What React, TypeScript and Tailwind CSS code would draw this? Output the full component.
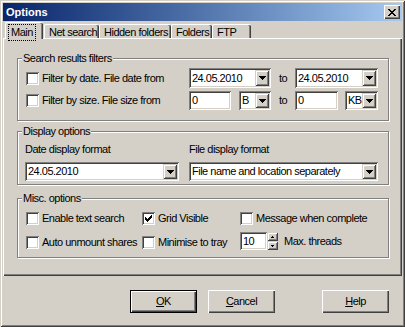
import React from "react";

const sunken =
  "bg-white shadow-[inset_1px_1px_0_#808080,inset_-1px_-1px_0_#ffffff,inset_2px_2px_0_#404040,inset_-2px_-2px_0_#d4d0c8]";
const raised =
  "bg-[#d4d0c8] shadow-[inset_1px_1px_0_#d4d0c8,inset_-1px_-1px_0_#404040,inset_2px_2px_0_#ffffff,inset_-2px_-2px_0_#808080]";
const pushButton =
  "bg-[#d4d0c8] shadow-[inset_1px_1px_0_#ffffff,inset_-1px_-1px_0_#404040,inset_-2px_-2px_0_#808080]";

function DownArrow() {
  return (
    <svg width="7" height="4" viewBox="0 0 7 4" shapeRendering="crispEdges">
      <path d="M0 0h7v1H0zM1 1h5v1H1zM2 2h3v1H2zM3 3h1v1H3z" fill="#000" />
    </svg>
  );
}

function Combo({ value, className }: { value: string; className: string }) {
  return (
    <div className={`${sunken} flex p-[2px] ${className}`}>
      <span className="flex flex-1 items-center overflow-hidden whitespace-nowrap pl-[1px]">{value}</span>
      <span className={`${raised} flex w-[14px] shrink-0 items-center justify-center`}>
        <DownArrow />
      </span>
    </div>
  );
}

function Edit({ value, className }: { value: string; className: string }) {
  return <div className={`${sunken} flex items-center pl-[3px] ${className}`}>{value}</div>;
}

function Check({ checked }: { checked?: boolean }) {
  return (
    <span className={`${sunken} flex h-[13px] w-[13px] shrink-0 items-center justify-center`}>
      {checked && (
        <svg width="7" height="7" viewBox="0 0 7 7" shapeRendering="crispEdges">
          <path
            d="M0 2h1v3H0zM1 3h1v3H1zM2 4h1v3H2zM3 3h1v3H3zM4 2h1v3H4zM5 1h1v3H5zM6 0h1v3H6z"
            fill="#000"
          />
        </svg>
      )}
    </span>
  );
}

function CheckItem({ label, checked, className = "" }: { label: string; checked?: boolean; className?: string }) {
  return (
    <div className={`flex items-center gap-[3px] whitespace-nowrap ${className}`}>
      <Check checked={checked} />
      <span>{label}</span>
    </div>
  );
}

function Group({ title, className, children }: { title: string; className: string; children: React.ReactNode }) {
  return (
    <div className={`mx-[13px] border border-[#808080] shadow-[1px_1px_0_#ffffff,inset_1px_1px_0_#ffffff] ${className}`}>
      <div className="-mt-[7px] ml-[4px] w-fit bg-[#d4d0c8] px-[1px]">{title}</div>
      {children}
    </div>
  );
}

const TABS = [
  { label: "Net search", w: "w-[55px]" },
  { label: "Hidden folders", w: "w-[72px]" },
  { label: "Folders", w: "w-[41px]" },
  { label: "FTP", w: "w-[39px]" },
];

function Btn({ first, rest, isDefault }: { first: string; rest: string; isDefault?: boolean }) {
  return (
    <div className={`h-[23px] w-[67px] ${isDefault ? "border border-black" : ""}`}>
      <div className={`${pushButton} flex h-full w-full items-center justify-center`}>
        <span>
          <span className="underline underline-offset-1">{first}</span>
          {rest}
        </span>
      </div>
    </div>
  );
}

export default function App() {
  return (
    <div className="h-[327px] w-[405px] bg-[#d4d0c8] p-[3px] font-['Liberation_Sans',Arial,sans-serif] text-[11px] leading-[13px] tracking-[-0.5px] text-black shadow-[inset_1px_1px_0_#d4d0c8,inset_-1px_-1px_0_#404040,inset_2px_2px_0_#ffffff,inset_-2px_-2px_0_#808080]">
      {/* title bar */}
      <div className="flex h-[18px] items-center justify-between bg-gradient-to-r from-[#0a246a] to-[#a6caf0] pl-[3px] pr-[2px]">
        <span className="font-bold tracking-normal text-white">Options</span>
        <span className={`${pushButton} flex h-[14px] w-[16px] items-center justify-center`}>
          <svg width="8" height="7" viewBox="0 0 8 7" shapeRendering="crispEdges">
            <path
              d="M0 0h2v1H0zM6 0h2v1H6zM1 1h2v1H1zM5 1h2v1H5zM2 2h4v1H2zM3 3h2v1H3zM2 4h4v1H2zM1 5h2v1H1zM5 5h2v1H5zM0 6h2v1H0zM6 6h2v1H6z"
              fill="#000"
            />
          </svg>
        </span>
      </div>

      {/* tabs */}
      <div className="mt-[1px] flex h-[16px] items-end pl-[2px]">
        <div className="relative z-10 -mb-[1px] flex h-[17px] w-[38px] items-start rounded-t-[2px] border-l border-t border-white bg-[#d4d0c8] pl-[2px] pt-[1px] shadow-[inset_-1px_0_0_#404040,inset_-2px_0_0_#808080]">
          <span className="border border-dotted border-black px-[2px] py-[1px]">Main</span>
        </div>
        <div className="w-[1px]" />
        {TABS.map((t) => (
          <div
            key={t.label}
            className={`flex h-[14px] ${t.w} items-start whitespace-nowrap rounded-t-[2px] border-l border-t border-white pl-[4px] pt-[1px] shadow-[inset_-1px_0_0_#404040,inset_-2px_0_0_#808080]`}
          >
            {t.label}
          </div>
        ))}
      </div>

      {/* tab panel */}
      <div className="h-[238px] w-[399px] border-l border-t border-white pt-[19px] shadow-[inset_-1px_-1px_0_#404040,inset_-2px_-2px_0_#808080]">
        <Group title="Search results filters" className="h-[63px]">
          <div className="mt-[3px] grid grid-cols-[163px_82px_24px_83px] grid-rows-[20px_19px] gap-y-[3px] pl-[8px]">
            <CheckItem label="Filter by date. File date from" />
            <Combo value="24.05.2010" className="h-[20px] w-[82px]" />
            <span className="flex items-center pl-[8px]">to</span>
            <Combo value="24.05.2010" className="h-[20px] w-[83px]" />

            <CheckItem label="Filter by size. File size from" />
            <div className="flex gap-[8px]">
              <Edit value="0" className="h-[19px] w-[42px]" />
              <Combo value="B" className="h-[19px] w-[32px]" />
            </div>
            <span className="flex items-center pl-[8px]">to</span>
            <div className="flex gap-[7px]">
              <Edit value="0" className="h-[19px] w-[43px]" />
              <Combo value="KB" className="h-[19px] w-[33px]" />
            </div>
          </div>
        </Group>

        <Group title="Display options" className="mt-[10px] h-[54px]">
          <div className="mt-[5px] grid grid-cols-[164px_189px] pl-[7px]">
            <span>Date display format</span>
            <span>File display format</span>
            <Combo value="24.05.2010" className="mt-[6px] h-[19px] w-[154px]" />
            <Combo value="File name and location separately" className="mt-[6px] h-[19px] w-[189px]" />
          </div>
        </Group>

        <Group title="Misc. options" className="mt-[13px] h-[60px]">
          <div className="mt-[5px] grid grid-cols-[116px_98px_1fr] grid-rows-[17px_20px] items-center gap-y-[4px] pl-[8px]">
            <CheckItem label="Enable text search" />
            <CheckItem label="Grid Visible" checked />
            <CheckItem label="Message when complete" />

            <CheckItem label="Auto unmount shares" className="mt-[3px]" />
            <CheckItem label="Minimise to tray" className="mt-[3px]" />
            <div className="flex items-center">
              <Edit value="10" className="h-[18px] w-[27px]" />
              <div className="flex h-[18px] w-[11px] flex-col">
                <span className={`${raised} flex flex-1 items-center justify-center`}>
                  <svg width="3" height="2" viewBox="0 0 3 2" shapeRendering="crispEdges">
                    <path d="M1 0h1v1H1zM0 1h3v1H0z" fill="#000" />
                  </svg>
                </span>
                <span className={`${raised} flex flex-1 items-center justify-center`}>
                  <svg width="3" height="2" viewBox="0 0 3 2" shapeRendering="crispEdges">
                    <path d="M0 0h3v1H0zM1 1h1v1H1z" fill="#000" />
                  </svg>
                </span>
              </div>
              <span className="ml-[6px]">Max. threads</span>
            </div>
          </div>
        </Group>
      </div>

      {/* buttons */}
      <div className="mt-[14px] flex pl-[127px]">
        <Btn first="O" rest="K" isDefault />
        <div className="w-[11px]" />
        <Btn first="C" rest="ancel" />
        <div className="w-[47px]" />
        <Btn first="H" rest="elp" />
      </div>
    </div>
  );
}
